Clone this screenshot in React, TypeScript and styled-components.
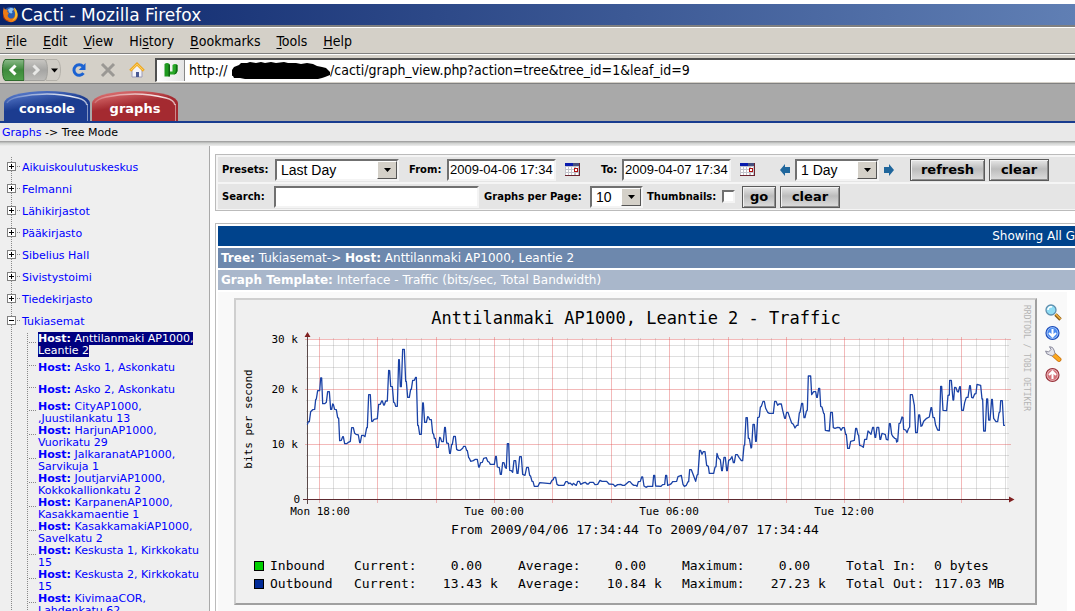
import React from "react";
import styled, { createGlobalStyle, css } from "styled-components";

const UI = `"DejaVu Sans Condensed", "DejaVu Sans", sans-serif`;
const WEB = `"DejaVu Sans", Verdana, sans-serif`;
const FIELD = `"Liberation Sans", Arial, sans-serif`;
const MONO = `"DejaVu Sans Mono", monospace`;

const Global = createGlobalStyle`
  *, *::before, *::after { box-sizing: border-box; }
  html, body { margin: 0; padding: 0; background: #fff; }
  a { text-decoration: none; }
`;

const Page = styled.div`
  display: flex;
  flex-direction: column;
  height: 100vh;
  overflow: hidden;
  padding-top: 4px;
  font-family: ${WEB};
  color: #000;
`;

/* ---------- browser chrome ---------- */

const TitleBar = styled.header`
  display: flex;
  flex: none;
  align-items: center;
  gap: 2px;
  height: 21px;
  padding-left: 2px;
  background: linear-gradient(90deg, #0a246a, #607fb4);
  color: #fff;
  font: 17px/22px ${WEB};
  white-space: nowrap;
`;

const MenuBar = styled.nav`
  display: flex;
  flex: none;
  gap: 16px;
  height: 29px;
  padding-left: 6px;
  border-top: 2px solid #808080;
  border-bottom: 1px solid #808080;
  box-shadow: inset 0 1px #fff;
  background: #d4d0c8;
`;

const MenuItem = styled.button`
  padding: 1px 0 0;
  border: 0;
  background: none;
  color: #000;
  font: 14px/26px ${UI};
  u { text-underline-offset: 2px; }
`;

const Toolbar = styled.div`
  display: flex;
  flex: none;
  align-items: center;
  height: 30px;
  padding: 1px 0 0 2px;
  border-top: 1px solid #fff;
  border-bottom: 1px solid #808080;
  background: #d4d0c8;
`;

const ToolButton = styled.button<{ $gap?: number }>`
  display: flex;
  padding: 0;
  margin-left: ${(p) => p.$gap ?? 0}px;
  border: 0;
  background: none;
`;

const Address = styled.div`
  display: flex;
  flex: 1;
  align-items: center;
  height: 24px;
  margin-left: 10px;
  border: 2px solid #505050;
  border-right: 0;
  border-bottom: 1px solid #fff;
  background: #fff;
  font: 14px/20px ${UI};
`;

const Scheme = styled.span`
  width: 43px;
`;

const SiteIcon = styled.span`
  display: flex;
  align-items: center;
  justify-content: center;
  width: 28px;
  height: 21px;
  margin-right: 4px;
  border-right: 1px solid #888;
  background: linear-gradient(90deg, #fff, #e4e4e4);
`;

const AddressInput = styled.input`
  flex: 1;
  min-width: 0;
  height: 20px;
  padding: 0;
  border: 0;
  outline: 0;
  background: none;
  color: #000;
  font: 14px/20px ${UI};
`;

/* ---------- page header ---------- */

const TabStrip = styled.nav`
  display: flex;
  flex: none;
  align-items: flex-end;
  gap: 2px;
  height: 39px;
  padding-left: 4px;
  border-bottom: 2px solid #183c8f;
  background: #a9a9a9;
`;

const Tab = styled.a`
  display: grid;
  width: 86px;
  height: 30px;
  color: #fff;
  font: bold 13px/18px ${WEB};
  > * { grid-area: 1 / 1; }
  span { padding-top: 9px; text-align: center; }
`;

const Breadcrumb = styled.div`
  flex: none;
  height: 18px;
  padding-left: 2px;
  background: #e9e9e9;
  font: 11px/19px ${WEB};
  a { color: #00f; }
`;

const Shade = styled.div`
  flex: none;
  height: 5px;
  background: linear-gradient(#969696, #d0d2d0 45%, #eee);
`;

const Columns = styled.div`
  display: flex;
  flex: 1;
  min-height: 0;
`;

/* ---------- tree ---------- */

const dotsDown = css`
  background-image: repeating-linear-gradient(#888 0 1px, transparent 1px 2px);
  background-repeat: no-repeat;
`;

const Sidebar = styled.aside`
  flex: none;
  width: 210px;
  padding-top: 11px;
  border-right: 1px solid #a9a9a9;
  background: #efefef;
  overflow: hidden;
  font: 11px/12px ${WEB};
`;

const Tree = styled.ul`
  margin: 0;
  padding: 0 0 0 7px;
  list-style: none;
  ${dotsDown}
  background-size: 1px 100%;
  background-position: 11px 0;
`;

const Branch = styled.div`
  display: flex;
  align-items: center;
  height: 22px;
  a { color: #00f; }
`;

const Toggle = styled.button`
  display: flex;
  width: 9px;
  height: 9px;
  padding: 0;
  margin-bottom: 4px;
  border: 0;
  background: none;
`;

const Dots = styled.span<{ $w: number }>`
  flex: none;
  width: ${(p) => p.$w}px;
  height: 1px;
  background: repeating-linear-gradient(90deg, transparent 0 1px, #888 1px 2px);
`;

const BranchDots = styled(Dots)`
  margin: 0 2px 4px 0;
`;

const Hosts = styled.ul`
  margin: 0;
  padding: 0 0 0 20px;
  list-style: none;
  ${dotsDown}
  background-size: 1px 100%;
  background-position: 20px 0;
`;

const HostRow = styled.li<{ $short?: boolean }>`
  display: flex;
  height: ${(p) => (p.$short ? 22 : 24)}px;
  padding-top: ${(p) => (p.$short ? 5 : 0)}px;
`;

const HostDots = styled(Dots)<{ $short?: boolean }>`
  margin: ${(p) => (p.$short ? 3 : 9)}px 2px 0 1px;
`;

const HostLink = styled.a`
  color: #00f;
  white-space: nowrap;
`;

const Mark = styled.span<{ $on?: boolean }>`
  ${(p) => p.$on && css`background: #000080; color: #fff;`}
`;

/* ---------- filter ---------- */

const Main = styled.main`
  display: flex;
  flex: 1;
  flex-direction: column;
  gap: 12px;
  min-width: 0;
  padding: 8px 0 0 5px;
  background: #fff;
  overflow: hidden;
`;

const FilterBox = styled.form`
  flex: none;
  display: flex;
  flex-direction: column;
  gap: 2px;
  padding: 2px 0 1px 2px;
  border: 1px solid #bbb;
  border-right: 0;
  background: #f5f5f5;
`;

const FilterRow = styled.div`
  display: flex;
  align-items: center;
  height: 25px;
  padding-left: 4px;
  background: #e5e5e5;
  white-space: nowrap;
`;

const Label = styled.label<{ $w: number; $gap?: number }>`
  flex: none;
  width: ${(p) => p.$w}px;
  margin-left: ${(p) => p.$gap ?? 0}px;
  font: bold 10px/22px ${WEB};
`;

const sunken = css`
  border: 2px solid;
  border-color: #707070 #f4f4f4 #f4f4f4 #707070;
  background: #fff;
`;

const Text = styled.input<{ $w: number }>`
  flex: none;
  width: ${(p) => p.$w}px;
  height: 22px;
  padding: 0 1px;
  outline: 0;
  color: #000;
  font: 13px/18px ${FIELD};
  ${sunken}
`;

const SelectBox = styled.span<{ $w: number }>`
  display: flex;
  flex: none;
  width: ${(p) => p.$w}px;
  height: 22px;
  ${sunken}
  select {
    flex: 1;
    min-width: 0;
    appearance: none;
    padding: 0 0 0 4px;
    border: 0;
    outline: 0;
    background: none;
    color: #000;
    font: 14px/18px ${FIELD};
  }
`;

const Drop = styled.span`
  display: flex;
  flex: none;
  align-items: center;
  justify-content: center;
  width: 20px;
  border: 1px solid;
  border-color: #fff #555 #555 #fff;
  background: #d4d0c8;
`;

const IconButton = styled.button<{ $gap: number; $after?: number }>`
  display: flex;
  flex: none;
  margin: 0 ${(p) => p.$after ?? 0}px 0 ${(p) => p.$gap}px;
  padding: 0;
  border: 0;
  background: none;
`;

const PushButton = styled.button<{ $w: number; $gap: number }>`
  flex: none;
  width: ${(p) => p.$w}px;
  height: 22px;
  margin-left: ${(p) => p.$gap}px;
  padding: 0;
  border: 1px solid #5a5a5a;
  box-shadow: inset 1px 1px #f2f2f2, inset -1px -1px #8c8c8c;
  background: linear-gradient(#e6e6e6, #bcbcbc 45%, #ddd);
  color: #000;
  font: bold 13px/18px ${WEB};
`;

const Check = styled.input`
  flex: none;
  appearance: none;
  width: 13px;
  height: 13px;
  margin: 0;
  ${sunken}
`;

/* ---------- graph list ---------- */

const Results = styled.section`
  display: flex;
  flex: none;
  flex-direction: column;
  gap: 2px;
  padding: 2px 0 20px 2px;
  border: 1px solid #bbb;
  border-right: 0;
  background: #fff;
`;

const Bar = styled.div<{ $bg: string; $end?: boolean }>`
  height: 20px;
  padding-left: 3px;
  background: ${(p) => p.$bg};
  color: #fff;
  font: 12px/20px ${WEB};
  text-align: ${(p) => (p.$end ? "right" : "left")};
  white-space: nowrap;
`;

const GraphRow = styled.div`
  display: flex;
  align-self: flex-start;
  gap: 8px;
  padding: 6px 5px 6px 16px;
  background: #f9f9f9;
`;

const Graph = styled.figure`
  margin: 0;
  padding-bottom: 10px;
  border: 2px solid;
  border-color: #cfcfcf #a0a0a0 #a0a0a0 #cfcfcf;
  background: #f0f0f0;
  > svg { display: block; }
`;

const Legend = styled.table`
  margin-left: 18px;
  border-collapse: collapse;
  table-layout: fixed;
  width: 764px;
  font: 13px/18px ${MONO};
  white-space: nowrap;
  th, td { padding: 0; font-weight: normal; text-align: left; }
`;

const Num = styled.td`
  && { text-align: right; }
`;

const Unit = styled.td`
  && { padding-left: 8px; }
`;

const Swatch = styled.span<{ $c: string }>`
  display: block;
  width: 10px;
  height: 10px;
  border: 1px solid #000;
  background: ${(p) => p.$c};
`;

const Actions = styled.div`
  display: flex;
  flex-direction: column;
  gap: 5px;
  padding-top: 6px;
  a { display: flex; height: 16px; }
`;

/* ---------- icons ---------- */

const Firefox = () => (
  <svg width="17" height="17" viewBox="0 0 17 17">
    <circle cx="8.5" cy="8" r="7" fill="#2a5fb4" />
    <path d="M6 3.500c2-2 5-2 6 0-1 1-2 1-2 2 1 1 0 2-1 2L7 6.500z" fill="#8fc4f0" />
    <path d="M2 1c0 2 1 2.500 2 2.500l2 .500c-1 1-1 2 0 2.500 1 0 1 1 0 2-1 2 1 4 3 4 3 0 4-2 4-5 0-2-1-3-2-4 4 1 6 6 4 9-2 4-7 4.500-10 2.500C1 12.500 0 7 2 1z" fill="#ee7a14" />
    <path d="M12 1.500c3 2 4 6 3 9-1 2-3 4-5 4 3-2 4-5 3-8 0-2-1-3-1-5z" fill="#f9c22e" />
    <path d="M1 6c0 5 3 9 7 9-3 1-6-1-7-4z" fill="#a8330c" />
  </svg>
);

const BackForward = () => (
  <svg width="60" height="24" viewBox="0 0 60 24">
    <defs>
      <linearGradient id="back" x1="0" y1="0" x2="0" y2="1">
        <stop offset="0" stopColor="#8cb989" />
        <stop offset="0.5" stopColor="#3e8a3c" />
        <stop offset="1" stopColor="#4fa04a" />
      </linearGradient>
      <linearGradient id="fwd" x1="0" y1="0" x2="0" y2="1">
        <stop offset="0" stopColor="#c9c7c3" />
        <stop offset="0.5" stopColor="#a5a5a3" />
        <stop offset="1" stopColor="#bdbcb9" />
      </linearGradient>
    </defs>
    <path d="M44 1.500h11q3.500 3 3.500 10.500T55 22.500H44z" fill="#cfccc5" stroke="#b4b1aa" />
    <path d="M3 1.500h19v21H3Q.500 20 .500 12T3 1.500z" fill="url(#back)" stroke="#2e6b2d" />
    <path d="M22.500 1.500h20q3 3 3 10.500t-3 10.500h-20z" fill="url(#fwd)" stroke="#a3a29e" />
    <path d="M13.500 7.500L9 12l4.500 4.500" fill="none" stroke="#fff" strokeWidth="3" />
    <path d="M31.500 7.500L36 12l-4.500 4.500" fill="none" stroke="#e8e8e6" strokeWidth="3" />
    <path d="M49 10.500h7l-3.500 4z" fill="#000" />
  </svg>
);

const Reload = () => (
  <svg width="16" height="16" viewBox="0 0 16 16">
    <path d="M12.500 11.200A5.300 5.300 0 1 1 12 4.300" fill="none" stroke="#1b62d2" strokeWidth="3" />
    <path d="M14.500 1v7H7.800z" fill="#1b62d2" />
  </svg>
);

const Stop = () => (
  <svg width="16" height="16" viewBox="0 0 16 16">
    <path d="M2 2l12 12M14 2L2 14" stroke="#9a9894" strokeWidth="3" />
  </svg>
);

const Home = () => (
  <svg width="16" height="16" viewBox="0 0 16 16">
    <path d="M3 8l5-5 5 5v7H3z" fill="#f4f4fa" stroke="#9c9cb8" />
    <path d="M1.200 8.800L8 2l6.800 6.800" fill="none" stroke="#f0a820" strokeWidth="2.800" />
    <path d="M2 8.200l6-6 6 6" fill="none" stroke="#fbd870" strokeWidth="1" />
    <rect x="7" y="10" width="3" height="5" fill="#4a5a94" />
  </svg>
);

const Cactus = () => (
  <svg width="16" height="16" viewBox="0 0 16 16">
    <path d="M1.500 2Q4 0 6.500 2v12.500h-5z" fill="#1e9a1e" />
    <path d="M5.500 2.500Q6.500 1.800 7 3v11.500H5.500z" fill="#0d6010" />
    <path d="M7 9.500h2.500V3Q12 1 14.500 3v6q-1 3.500-4 3.500H7z" fill="#27a827" />
    <path d="M12.800 2.600L14.500 3v6q-1 3.500-4 3.500 2.300-1 2.300-4z" fill="#0f6a14" />
  </svg>
);

const Scribble = () => (
  <svg width="98" height="18" viewBox="0 0 98 18">
    <path
      d="M0 9l2-3 5-2 2-2 6 0 3-1 6 1 5-1 4 1 6-1 5 1 8-1 4 1 8 0 5 1 6-1 6 1 4 2 5 1 4 1 2 2 2 2 0 3-5 2-3 1-4 1-8 0-6 1-8-1-8 1-7-1-7 0-6 1-9-1-8 0-6 0-5-1-6 0-1-2-4-1z"
      fill="#000"
    />
  </svg>
);

const TabShape = ({ id, light, dark }: { id: string; light: string; dark: string }) => (
  <svg width="86" height="30" viewBox="0 0 86 30">
    <defs>
      <linearGradient id={id} x1="0" y1="0" x2="0.500" y2="1">
        <stop offset="0" stopColor={light} />
        <stop offset="0.550" stopColor={dark} />
        <stop offset="1" stopColor={dark} />
      </linearGradient>
      <linearGradient id={`${id}-edge`} x1="0" y1="0" x2="1" y2="0">
        <stop offset="0" stopColor="#fff" stopOpacity="0.200" />
        <stop offset="0.800" stopColor="#fff" stopOpacity="0.900" />
        <stop offset="1" stopColor="#fff" stopOpacity="0.600" />
      </linearGradient>
    </defs>
    <path d="M0 30V12Q1 7 10 4 25 0 43 0T76 4Q85 7 86 12V30z" fill={`url(#${id})`} />
    <path d="M3 12Q5 8 14 6 28 3 43 3T74 7Q82 9 83 14" fill="none" stroke={`url(#${id}-edge)`} strokeWidth="1.600" />
    <path d="M83.500 13V30" stroke="#fff" strokeOpacity="0.450" strokeWidth="1" />
  </svg>
);

const Box = ({ open }: { open?: boolean }) => (
  <svg width="9" height="9" viewBox="0 0 9 9" shapeRendering="crispEdges">
    <rect width="9" height="9" fill="#808080" />
    <rect x="1" y="1" width="7" height="7" fill="#fff" />
    <rect x="2" y="4" width="5" height="1" fill="#000" />
    {!open && <rect x="4" y="2" width="1" height="5" fill="#000" />}
  </svg>
);

const Triangle = () => (
  <svg width="7" height="4" viewBox="0 0 7 4">
    <path d="M0 0h7L3.500 4z" fill="#000" />
  </svg>
);

const Calendar = () => (
  <svg width="15" height="13" viewBox="0 0 15 13" shapeRendering="crispEdges">
    <rect width="15" height="13" fill="#c4c4cc" />
    <rect width="8" height="3" fill="#0a1cae" />
    <rect x="8" width="6" height="3" fill="#46507e" />
    {[0, 1, 2].map((r) =>
      [0, 1, 2, 3].map((c) => (
        <rect key={`${r}-${c}`} x={1 + c * 3 + (c > 2 ? 1 : 0)} y={4 + r * 3} width="2" height="2" fill="#fff" />
      ))
    )}
    <rect x="0" y="12" width="15" height="1" fill="#6a2430" />
    <rect x="14" y="0" width="1" height="13" fill="#6a2430" />
    <rect x="9" y="5" width="4" height="4" fill="#b01010" />
    <rect x="10" y="6" width="2" height="2" fill="#fff" />
  </svg>
);

const Arrow = ({ right }: { right?: boolean }) => (
  <svg width="10" height="12" viewBox="0 0 10 12">
    <path
      d={right ? "M10 6L5 0v3H0v6h5v3z" : "M0 6l5-6v3h5v6H5v3z"}
      fill="#1f669c"
    />
  </svg>
);

const Magnifier = () => (
  <svg width="17" height="17" viewBox="0 0 17 17">
    <path d="M10.500 10.500l5 5" stroke="#8a5a14" strokeWidth="3.400" />
    <path d="M10.500 10l5 5" stroke="#f0b040" strokeWidth="1.600" />
    <circle cx="6" cy="6" r="5" fill="#8fdcf4" stroke="#5f8fae" strokeWidth="1.300" />
    <path d="M3 6a3 3 0 0 1 4-3" fill="none" stroke="#fff" strokeWidth="1.600" />
  </svg>
);

const Round = ({ up, rim, fill }: { up?: boolean; rim: string; fill: string }) => (
  <svg width="16" height="16" viewBox="0 0 16 16">
    <circle cx="7.500" cy="8" r="6.500" fill={fill} stroke={rim} strokeWidth="1.200" />
    <circle cx="7.500" cy="8" r="5.400" fill="none" stroke="#fff" strokeOpacity="0.450" />
    <path
      d={up ? "M7.500 12V4.500M4 8l3.500-3.500L11 8" : "M7.500 4v7.500M4 8l3.500 3.500L11 8"}
      fill="none"
      stroke="#fff"
      strokeWidth="2"
    />
  </svg>
);

const Wrench = () => (
  <svg width="17" height="17" viewBox="0 0 17 17">
    <path d="M9 9l5 4.500" stroke="#c8700c" strokeWidth="4.800" strokeLinecap="round" />
    <path d="M9 9l5 4.500" stroke="#fba820" strokeWidth="3.200" strokeLinecap="round" />
    <path d="M4.500.700Q8 .500 9 4l1 3.500-2.500 2.500-3-1Q1 8.500.600 5L3.500 6 6 3.500z" fill="#e4e4ec" stroke="#8a8a9c" />
  </svg>
);

/* ---------- chart ---------- */

/* Samples of the traffic line, in thirds of a pixel from the chart's origin. */
const TRACE: { from: number; points: string }[] = [
  {
    from: 0,
    points:
      "232,389 235,380 238,380 242,350 248,344 254,343 257,314 259,312 263,287 269,287 272,249 275,249 278,326 284,326 289,322 293,290 298,290 302,343 305,343 308,327 310,328 314,343 319,344 323,368 326,370 329,437 334,436 338,425 340,425 344,446 350,446 355,442 361,439 365,398 370,398 374,415 378,418 385,420 389,443 391,443 395,421 400,421 405,425 410,398 412,398 416,299 421,299 425,379 428,379 432,373 442,371 446,328 451,328 455,318 457,318 461,330 463,330 467,318 472,318 476,226 479,227 482,274 487,275 491,322 494,324 497,334 502,334 506,194 508,194 511,275 514,275 518,163 523,163 527,259 529,259 533,307 538,307 542,283 544,283 548,256 553,256 557,247 559,247 563,391 565,391 569,418 574,418 578,324 580,324 584,382 589,382 593,365 596,367 599,374 604,374 608,414 611,418 613,430 616,430 620,457 625,457 629,427 632,430 635,440 640,440 644,397 646,397 650,444 655,445 659,475 661,475 665,448 667,448 671,424 676,424 680,463 685,466 691,466 698,460 701,454 706,454 710,466 712,467 716,488 718,490 722,499 730,497 736,493 742,493 746,516 748,516 752,503 757,502 761,490 769,488 773,499 777,501 781,508 793,508 797,484 799,484 802,516 808,518",
  },
  {
    from: 810,
    points:
      "1,538 4,538 8,503 12,503 16,518 19,520 22,446 26,446 29,526 34,527 38,532 42,497 47,497 51,535 54,535 59,485 64,485 68,538 75,541 80,517 85,517 89,541 92,544 96,559 99,559 103,574 114,574 119,563 151,566 156,556 160,554 162,547 167,547 171,568 176,571 192,571 197,560 202,560 206,566 210,564 217,570 220,565 224,568 229,571 233,559 238,559 242,568 252,563 256,562 261,567 265,567 270,562 280,562 285,569 293,568 300,556 306,559 320,559 327,567 340,568 345,574 353,569 362,568 368,571 374,571 386,560 390,560 397,568 402,571 407,571 411,574 415,560 421,559 425,546 428,546 432,573 438,577 443,574 458,574 461,541 464,541 467,573 483,574 488,569 494,568 497,541 500,541 503,571 509,569 514,566 518,560 530,559 534,545 544,541 549,568 553,574 559,571 564,560 566,560 569,524 574,524 580,540 587,559 591,541 594,538 599,466 602,466 606,478 610,470 615,470 620,511 625,514 628,535 641,535 645,517 648,515 651,475 656,490 661,494 665,527 667,527 672,487 676,487 680,527 682,527 686,496 691,493 696,485 700,503 703,503 707,479 712,479 717,487 724,497 728,497 732,452 734,450 738,368 742,368 745,430 748,430 753,459 755,457 759,388 763,388 767,439 769,439 773,368 778,366 781,337 784,334 789,319 793,319 797,340 803,352 808,355",
  },
  {
    from: 1620,
    points:
      "0,355 10,355 14,319 18,319 23,331 27,327 34,327 38,346 44,370 46,370 50,352 54,352 59,367 65,384 70,388 75,399 80,391 84,391 88,354 90,352 95,325 98,325 102,368 105,368 109,349 112,345 115,243 122,243 125,299 131,290 137,290 140,307 142,307 146,280 149,280 152,334 156,336 161,355 163,357 166,406 178,408 182,352 187,352 190,398 195,400 203,397 209,398 213,406 218,398 223,398 227,418 229,418 233,460 238,460 242,439 253,436 257,400 260,400 264,419 266,421 269,451 275,453 280,457 284,433 290,433 294,408 298,412 303,418 308,397 311,397 315,427 317,427 321,397 326,397 330,433 332,433 336,415 342,417 346,419 349,433 354,435 358,386 361,386 365,418 368,424 374,430 378,431 380,441 383,439 387,386 391,384 396,366 399,368 401,403 407,405 411,413 415,402 419,396 421,299 427,299 433,331 437,413 442,413 446,360 449,360 453,394 456,392 461,379 470,370 478,366 483,338 485,338 489,367 493,368 497,391 503,405 508,406 512,274 515,274 519,346 530,347 534,301 538,300 539,256 544,256 549,315 551,315 554,277 558,278 562,290 565,291 569,275 571,275 575,346 580,346 584,323 589,307 594,307 599,272 601,272 605,307 609,309 614,297 618,296 621,268 632,271 636,312 638,312 641,408 646,408 650,312 653,312 656,375 660,375 665,313 667,313 671,370 678,380 683,380 687,354 690,350 692,317 697,317 701,391 705,391",
  },
];

const tracePoints = TRACE.flatMap(({ from, points }) =>
  points.split(" ").map((p) => {
    const [x, y] = p.split(",").map(Number);
    return `${x + from},${y}`;
  })
).join(" ");

const PLOT = { left: 71, right: 771, top: 39, bottom: 199 };
const MAJOR_Y = [39, 89, 144];
const MINOR_Y = [45, 56, 67, 78, 100, 111, 122, 133, 155, 166, 177, 188];
const HOURS = Array.from({ length: 48 }, (_, i) => ({
  x: Math.floor(83.3 + i * 14.6),
  major: i % 4 === 0,
})).filter((h) => h.x < PLOT.right);

const TrafficChart = () => (
  <svg width="799" height="257" viewBox="0 0 799 257" role="img" aria-label="Traffic chart">
    <g shapeRendering="crispEdges">
      <rect x={PLOT.left} y={PLOT.top} width="700" height="160" fill="#fff" />
      {MINOR_Y.map((y) => (
        <rect key={y} x={PLOT.left - 1} y={y} width="703" height="1" fill="#8c8c8c" fillOpacity="0.280" />
      ))}
      {HOURS.map(({ x, major }) =>
        major ? (
          <rect key={x} x={x} y="37" width="1" height="166" fill="#e05050" fillOpacity="0.400" />
        ) : (
          <rect key={x} x={x} y="38" width="1" height="162" fill="#8c8c8c" fillOpacity="0.280" />
        )
      )}
      {MAJOR_Y.map((y) => (
        <rect key={y} x={PLOT.left - 2} y={y} width="706" height="1" fill="#e05050" fillOpacity="0.400" />
      ))}
      <rect x="71" y="36" width="1" height="168" fill="#5a4a4a" />
      <rect x="67" y="199" width="708" height="1" fill="#5e2a30" />
    </g>
    <path d="M71.500 32l3 5h-6zM773 196.500l5.500 3-5.500 3z" fill="#802020" />
    <g transform="translate(-6 -5) scale(0.33333)">
      <polyline points={tracePoints} fill="none" stroke="#1a42a6" strokeWidth="3.900" strokeLinejoin="round" />
    </g>
    <g fontFamily={MONO} fill="#000">
      <text x="400" y="24" fontSize="17" textAnchor="middle">Anttilanmaki AP1000, Leantie 2 - Traffic</text>
      <g fontSize="11">
        <g textAnchor="end">
          <text x="62" y="43">30 k</text>
          <text x="62" y="93">20 k</text>
          <text x="62" y="148">10 k</text>
          <text x="64" y="203">0</text>
        </g>
        <g textAnchor="middle">
          <text x="84" y="215">Mon 18:00</text>
          <text x="258" y="215">Tue 00:00</text>
          <text x="433" y="215">Tue 06:00</text>
          <text x="608" y="215">Tue 12:00</text>
          <text transform="translate(16 119) rotate(-90)">bits per second</text>
        </g>
      </g>
      <text x="399" y="234" fontSize="13" textAnchor="middle">From 2009/04/06 17:34:44 To 2009/04/07 17:34:44</text>
      <text transform="translate(788 5) rotate(90)" fontSize="8" fill="#b4b4b4">RRDTOOL / TOBI OETIKER</text>
    </g>
  </svg>
);

/* ---------- data ---------- */

const MENU: [string, string, string][] = [
  ["", "F", "ile"],
  ["", "E", "dit"],
  ["", "V", "iew"],
  ["Hi", "s", "tory"],
  ["", "B", "ookmarks"],
  ["", "T", "ools"],
  ["", "H", "elp"],
];

const BRANCHES = [
  "Aikuiskoulutuskeskus",
  "Felmanni",
  "Lähikirjastot",
  "Pääkirjasto",
  "Sibelius Hall",
  "Sivistystoimi",
  "Tiedekirjasto",
];

const HOSTS: [string, string?][] = [
  ["Anttilanmaki AP1000,", "Leantie 2"],
  ["Asko 1, Askonkatu"],
  ["Asko 2, Askonkatu"],
  ["CityAP1000,", ",Juustilankatu 13"],
  ["HarjunAP1000,", "Vuorikatu 29"],
  ["JalkaranatAP1000,", "Sarvikuja 1"],
  ["JoutjarviAP1000,", "Kokkokallionkatu 2"],
  ["KarpanenAP1000,", "Kasakkamaentie 1"],
  ["KasakkamakiAP1000,", "Savelkatu 2"],
  ["Keskusta 1, Kirkkokatu", "15"],
  ["Keskusta 2, Kirkkokatu", "15"],
  ["KivimaaCOR,", "Lahdenkatu 62"],
];

const LEGEND = [
  { color: "#00cf00", name: "Inbound", cur: "0.00", avg: "0.00", max: "0.00", unit: "", total: "Total In:", sum: "0 bytes" },
  { color: "#002a97", name: "Outbound", cur: "13.43", avg: "10.84", max: "27.23", unit: "k", total: "Total Out:", sum: "117.03 MB" },
];

const COLS = [16, 84, 70, 58, 36, 70, 58, 36, 70, 58, 36, 88, 84];

const Select = ({ id, w, value, label }: { id: string; w: number; value: string; label?: string }) => (
  <SelectBox $w={w}>
    <select id={id} aria-label={label} defaultValue={value}>
      <option>{value}</option>
    </select>
    <Drop><Triangle /></Drop>
  </SelectBox>
);

export default function App() {
  return (
    <Page>
      <Global />
      <TitleBar>
        <Firefox />
        Cacti - Mozilla Firefox
      </TitleBar>
      <MenuBar>
        {MENU.map(([pre, key, post]) => (
          <MenuItem key={pre + key + post}>{pre}<u>{key}</u>{post}</MenuItem>
        ))}
      </MenuBar>
      <Toolbar>
        <ToolButton aria-label="Back and forward"><BackForward /></ToolButton>
        <ToolButton $gap={9} aria-label="Reload"><Reload /></ToolButton>
        <ToolButton $gap={13} aria-label="Stop"><Stop /></ToolButton>
        <ToolButton $gap={13} aria-label="Home"><Home /></ToolButton>
        <Address>
          <SiteIcon><Cactus /></SiteIcon>
          <Scheme>http://</Scheme>
          <Scribble />
          <AddressInput aria-label="Address" defaultValue="/cacti/graph_view.php?action=tree&tree_id=1&leaf_id=9" />
        </Address>
      </Toolbar>

      <TabStrip>
        <Tab href="#console"><TabShape id="blue" light="#6488d8" dark="#1c3c90" /><span>console</span></Tab>
        <Tab href="#graphs"><TabShape id="red" light="#e88080" dark="#a42a30" /><span>graphs</span></Tab>
      </TabStrip>
      <Breadcrumb><a href="#graphs">Graphs</a> -&gt; Tree Mode</Breadcrumb>
      <Shade />

      <Columns>
        <Sidebar>
          <Tree>
            {BRANCHES.map((name) => (
              <li key={name}>
                <Branch>
                  <Toggle aria-label={`Expand ${name}`}><Box /></Toggle>
                  <BranchDots $w={4} />
                  <a href="#tree">{name}</a>
                </Branch>
              </li>
            ))}
            <li>
              <Branch>
                <Toggle aria-label="Collapse Tukiasemat"><Box open /></Toggle>
                <BranchDots $w={4} />
                <a href="#tree">Tukiasemat</a>
              </Branch>
              <Hosts>
                {HOSTS.map(([first, second], i) => (
                  <HostRow key={first} $short={!second}>
                    <HostDots $w={8} $short={!second} />
                    <HostLink href="#host">
                      <Mark $on={i === 0}>
                        <b>Host:</b> {first}
                        {second && <><br />{second}</>}
                      </Mark>
                    </HostLink>
                  </HostRow>
                ))}
              </Hosts>
            </li>
          </Tree>
        </Sidebar>

        <Main>
          <FilterBox>
            <FilterRow>
              <Label $w={53} htmlFor="presets">Presets:</Label>
              <Select id="presets" w={124} value="Last Day" />
              <Label $gap={10} $w={38} htmlFor="from">From:</Label>
              <Text id="from" $w={109} defaultValue="2009-04-06 17:34" />
              <IconButton $gap={9} type="button" aria-label="Start date"><Calendar /></IconButton>
              <Label $gap={21} $w={21} htmlFor="to">To:</Label>
              <Text id="to" $w={109} defaultValue="2009-04-07 17:34" />
              <IconButton $gap={9} type="button" aria-label="End date"><Calendar /></IconButton>
              <IconButton $gap={25} $after={5} type="button" aria-label="Shift back"><Arrow /></IconButton>
              <Select id="span" label="Time span" w={84} value="1 Day" />
              <IconButton $gap={5} type="button" aria-label="Shift forward"><Arrow right /></IconButton>
              <PushButton $gap={16} $w={75} type="button">refresh</PushButton>
              <PushButton $gap={4} $w={60} type="button">clear</PushButton>
            </FilterRow>
            <FilterRow>
              <Label $w={52} htmlFor="search">Search:</Label>
              <Text id="search" $w={205} />
              <Label $gap={5} $w={106} htmlFor="perpage">Graphs per Page:</Label>
              <Select id="perpage" w={53} value="10" />
              <Label $gap={4} $w={75} htmlFor="thumbs">Thumbnails:</Label>
              <Check id="thumbs" type="checkbox" />
              <PushButton $gap={7} $w={34} type="button">go</PushButton>
              <PushButton $gap={4} $w={60} type="button">clear</PushButton>
            </FilterRow>
          </FilterBox>

          <Results>
            <Bar $bg="#00438c" $end>Showing All G</Bar>
            <Bar $bg="#6d88ad"><b>Tree:</b> Tukiasemat-&gt; <b>Host:</b> Anttilanmaki AP1000, Leantie 2</Bar>
            <Bar $bg="#a9b7cb"><b>Graph Template:</b> Interface - Traffic (bits/sec, Total Bandwidth)</Bar>
            <GraphRow>
              <Graph>
                <TrafficChart />
                <Legend>
                  <colgroup>{COLS.map((w, i) => <col key={i} width={w} />)}</colgroup>
                  <tbody>
                    {LEGEND.map((r) => (
                      <tr key={r.name}>
                        <td><Swatch $c={r.color} /></td>
                        <th scope="row">{r.name}</th>
                        <td>Current:</td><Num>{r.cur}</Num><Unit>{r.unit}</Unit>
                        <td>Average:</td><Num>{r.avg}</Num><Unit>{r.unit}</Unit>
                        <td>Maximum:</td><Num>{r.max}</Num><Unit>{r.unit}</Unit>
                        <td>{r.total}</td><td>{r.sum}</td>
                      </tr>
                    ))}
                  </tbody>
                </Legend>
              </Graph>
              <Actions>
                <a href="#zoom" aria-label="Zoom graph"><Magnifier /></a>
                <a href="#csv" aria-label="Export"><Round rim="#1c4cb8" fill="#4a8af0" /></a>
                <a href="#source" aria-label="Properties"><Wrench /></a>
                <a href="#top" aria-label="Page top"><Round up rim="#98343c" fill="#d47078" /></a>
              </Actions>
            </GraphRow>
          </Results>
        </Main>
      </Columns>
    </Page>
  );
}
